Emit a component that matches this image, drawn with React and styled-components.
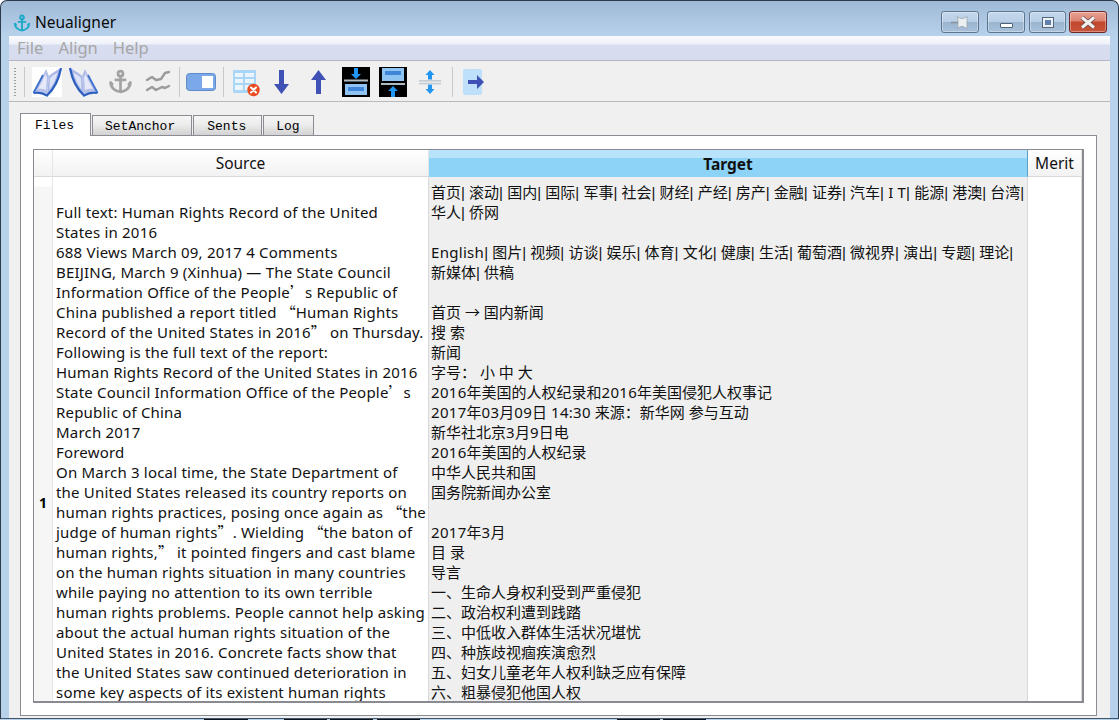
import React from "react";
import styled, { createGlobalStyle } from "styled-components";

const GlobalStyle = createGlobalStyle`
  html, body { margin: 0; padding: 0; background: #fff; }
  #root { width: 1119px; height: 720px; overflow: hidden; }
`;

const uiFont = `"Noto Sans", "Noto Sans CJK SC", sans-serif`;

const Page = styled.div`
  width: 1119px;
  height: 720px;
  display: flex;
  flex-direction: column;
  font-family: ${uiFont};
  overflow: hidden;
`;

const Window = styled.div`
  height: 719px;
  box-sizing: border-box;
  flex: none;
  display: flex;
  flex-direction: column;
  border: 1px solid #2c3a4a;
  border-bottom-color: #40566e;
  border-radius: 7px 7px 0 0;
  background: linear-gradient(180deg, #9fbad6 0, #b9d2ec 36px, #b8d1eb 100%);
`;

const TitleBar = styled.div`
  height: 35px;
  flex: none;
  display: flex;
  align-items: flex-start;
  padding: 10px 11px 0 12px;
  box-sizing: border-box;
`;

const TitleIcon = styled.div`
  width: 18px;
  height: 18px;
  margin: 3px 4px 0 0;
`;

const TitleText = styled.div`
  font-size: 15.5px;
  line-height: 23px;
  color: #0a0a0a;
  flex: 1;
`;

const CtrlButton = styled.div`
  width: ${(p) => p.$w || 38}px;
  height: 22px;
  margin-left: ${(p) => p.$gap || 0}px;
  box-sizing: border-box;
  border: 1px solid ${(p) => (p.$close ? "#6e2a26" : "#5d7692")};
  border-radius: 3px;
  background: ${(p) =>
    p.$close
      ? "linear-gradient(180deg, #e8a294 0, #dc8270 45%, #c2472c 50%, #c8553a 100%)"
      : "linear-gradient(180deg, #c5d8ec 0, #b9cfe6 48%, #9ab5d0 52%, #a8c1da 100%)"};
  box-shadow: inset 0 0 0 1px rgba(255, 255, 255, 0.35);
  display: flex;
  align-items: center;
  justify-content: center;
`;

const MinGlyph = styled.div`
  width: 13px;
  height: 5px;
  margin-top: 7px;
  box-sizing: border-box;
  background: #fff;
  border: 1px solid #4f6176;
  border-radius: 1px;
`;

const MaxGlyph = styled.div`
  width: 12px;
  height: 11px;
  box-sizing: border-box;
  background: #5f83aa;
  border: 3px solid #eef1f5;
  outline: 1px solid #55677c;
  outline-offset: -1px;
`;

const Client = styled.div`
  flex: 1;
  margin: 0 8px;
  min-height: 0;
  display: flex;
  flex-direction: column;
  background: #f0f0f0;
`;

const MenuBar = styled.div`
  height: 25px;
  flex: none;
  display: flex;
  gap: 15px;
  padding: 0 0 2px 8px;
  box-sizing: border-box;
  align-items: center;
  font-size: 16.5px;
  color: #a6a6a6;
  background: linear-gradient(180deg, #fbfcfe 0, #eef1f9 8px, #d8deef 9px, #d6dcee 100%);
  border-bottom: 1px solid #b4b6c4;
`;

const ToolBar = styled.div`
  height: 41px;
  flex: none;
  display: flex;
  align-items: center;
  box-sizing: border-box;
  padding: 1px 0 0 5px;
  background: #f0f0f0;
  border-bottom: 1px solid #b9b9b9;
`;

const Grip = styled.div`
  width: 2px;
  height: 28px;
  margin-right: 5px;
  background: repeating-linear-gradient(180deg, #9a9a9a 0 1px, transparent 1px 3px);
`;

const Sep = styled.div`
  width: 1px;
  height: 30px;
  flex: none;
  margin: 0 ${(p) => p.$r ?? 3}px 0 ${(p) => p.$l ?? 3}px;
  background: #c8c8c8;
`;

const Tool = styled.div`
  width: 37px;
  height: 30px;
  flex: none;
  display: flex;
  align-items: center;
  justify-content: center;
`;

const Content = styled.div`
  flex: 1;
  min-height: 0;
  display: flex;
  flex-direction: column;
  padding: 12px 13px 2px 11px;
`;

const TabRow = styled.div`
  display: flex;
  align-items: flex-end;
  height: 22px;
  flex: none;
  position: relative;
  z-index: 1;
  margin-bottom: -1px;
`;

const Tab = styled.div`
  height: ${(p) => (p.$active ? 23 : 21)}px;
  box-sizing: border-box;
  padding: 0 ${(p) => p.$r}px 0 ${(p) => p.$l}px;
  margin-right: 1px;
  font-family: "Liberation Mono", monospace;
  font-size: 13px;
  line-height: ${(p) => (p.$active ? 23 : 21)}px;
  color: #000;
  border: 1px solid #8b8b93;
  border-bottom: ${(p) => (p.$active ? "none" : "1px solid #8b8b93")};
  background: ${(p) => (p.$active ? "#fff" : "linear-gradient(180deg, #f6f6f6 0, #ececec 45%, #d2d2d2 100%)")};
`;

const Pane = styled.div`
  flex: 1;
  min-height: 0;
  box-sizing: border-box;
  background: #fff;
  border: 1px solid #8b8b93;
  padding: 13px 12px 12px 12px;
  display: flex;
`;

const Table = styled.div`
  flex: 1;
  min-height: 0;
  overflow: hidden;
  display: grid;
  grid-template-columns: 19px 376px 599px 1fr;
  grid-template-rows: 27px 650px;
  border: 1px solid #8a8a92;
  border-right-width: 2px;
  border-bottom-width: 2px;
  box-sizing: border-box;
`;

const HeadCell = styled.div`
  font-size: 15.5px;
  line-height: ${(p) => (p.$active ? 28 : 27)}px;
  text-align: center;
  color: #111;
  box-sizing: border-box;
  font-weight: ${(p) => (p.$active ? 700 : 400)};
  border-bottom: 1px solid ${(p) => (p.$active ? "#8cd3f7" : "#d9d9d9")};
  border-right: 1px solid ${(p) => (p.$active ? "#5d9fc4" : "#e6e6e6")};
  background: ${(p) => (p.$active ? "#8cd3f7" : "linear-gradient(180deg, #ffffff 0, #fafafa 9px, #f2f2f2 100%)")};
  box-shadow: ${(p) => (p.$active ? "inset 0 8px 0 #b9e3fa" : "none")};
`;

const RowHead = styled.div`
  display: flex;
  align-items: center;
  justify-content: center;
  font-size: 14px;
  font-weight: 700;
  color: #000;
  background: linear-gradient(180deg, #fff 0, #fff 9px, #f6f6f6 10px);
  border-right: 1px solid #e6e6e6;
`;

const Cell = styled.div`
  box-sizing: border-box;
  padding: 5px 0 0 ${(p) => p.$pad ?? 3}px;
  font-size: 15px;
  line-height: 20px;
  color: #111;
  white-space: pre;
  overflow: hidden;
  background: ${(p) => p.$bg || "#fff"};
  border-right: 1px solid #d8d8d8;
`;

const Line = styled.div`
  height: 20px;
`;

const LatinRun = styled.span`
  letter-spacing: ${(p) => p.$track}px;
`;

const WideMark = styled.span`
  font-family: "Noto Sans CJK SC", sans-serif;
`;

const BarMark = styled.span`
  font-family: "Liberation Sans", sans-serif;
`;

const TaskStrip = styled.div`
  flex: none;
  height: 1px;
  display: flex;
  background: #b9d1e8;
`;

const TaskPiece = styled.div`
  width: ${(p) => p.$w}px;
  flex: none;
  background: ${(p) => (p.$dark ? "#10141c" : "transparent")};
`;

const sourceLines = [
  "",
  "Full text: Human Rights Record of the United",
  "States in 2016",
  "688 Views March 09, 2017 4 Comments",
  "BEIJING, March 9 (Xinhua) — The State Council",
  "Information Office of the People’s Republic of",
  "China published a report titled “Human Rights",
  "Record of the United States in 2016” on Thursday.",
  "Following is the full text of the report:",
  "Human Rights Record of the United States in 2016",
  "State Council Information Office of the People’s",
  "Republic of China",
  "March 2017",
  "Foreword",
  "On March 3 local time, the State Department of",
  "the United States released its country reports on",
  "human rights practices, posing once again as “the",
  "judge of human rights”. Wielding “the baton of",
  "human rights,” it pointed fingers and cast blame",
  "on the human rights situation in many countries",
  "while paying no attention to its own terrible",
  "human rights problems. People cannot help asking",
  "about the actual human rights situation of the",
  "United States in 2016. Concrete facts show that",
  "the United States saw continued deterioration in",
  "some key aspects of its existent human rights",
];

const targetLines = [
  "首页| 滚动| 国内| 国际| 军事| 社会| 财经| 产经| 房产| 金融| 证券| 汽车| I T| 能源| 港澳| 台湾|",
  "华人| 侨网",
  "",
  "English| 图片| 视频| 访谈| 娱乐| 体育| 文化| 健康| 生活| 葡萄酒| 微视界| 演出| 专题| 理论|",
  "新媒体| 供稿",
  "",
  "首页 → 国内新闻",
  "搜 索",
  "新闻",
  "字号： 小 中 大",
  "2016年美国的人权纪录和2016年美国侵犯人权事记",
  "2017年03月09日 14:30 来源：新华网 参与互动",
  "新华社北京3月9日电",
  "2016年美国的人权纪录",
  "中华人民共和国",
  "国务院新闻办公室",
  "",
  "2017年3月",
  "目 录",
  "导言",
  "一、生命人身权利受到严重侵犯",
  "二、政治权利遭到践踏",
  "三、中低收入群体生活状况堪忧",
  "四、种族歧视痼疾演愈烈",
  "五、妇女儿童老年人权利缺乏应有保障",
  "六、粗暴侵犯他国人权",
];

const strip = [
  [204, 0], [44, 1], [36, 0], [43, 1], [3, 0], [43, 1], [4, 0], [43, 1], [197, 0], [43, 1], [3, 0], [43, 1],
];

// source text has curly quotes drawn full width, as the CJK font does
const sourceParts = (text) =>
  text.split(/([“”’])/).map((part, i) =>
    i % 2 ? <WideMark key={i}>{part}</WideMark> : <LatinRun key={i} $track={0.2}>{part}</LatinRun>
  );

// bars are narrow in the reference, digits and latin a little wide
const targetParts = (text) =>
  text.split(/(\| ?|[A-Za-z0-9:]+)/).map((part, i) => {
    if (i % 2 === 0) return part;
    if (part[0] === "|") return <BarMark key={i}>{part}</BarMark>;
    return <LatinRun key={i} $track={0.3}>{part}</LatinRun>;
  });

const AnchorGlyph = ({ color, size, width }) => (
  <svg width={size} height={size} viewBox="0 0 24 24" fill="none" stroke={color} strokeWidth={width} strokeLinecap="round" strokeLinejoin="round">
    <circle cx="12" cy="4.5" r="2.4" />
    <path d="M12 7v15M7.5 10.5h9M2.5 13l1.5 1.5 M2.5 13c0 5 4.5 8.500 9.500 9c5-.5 9.500-4 9.500-9M21.500 13 20 14.500" />
  </svg>
);

const BookGlyph = ({ flip, plate }) => (
  <svg width="30" height="30" viewBox="0 0 30 30" style={{ background: plate ? "#fff" : "none", transform: flip ? "scaleX(-1)" : "none" }}>
    <path d="M14 2 17 9 15 27C11 25 6 24 2 25 6 19 10 10 14 2z" fill="#b4bfe8" />
    <path d="M13.500 7 15 11 14 23C11 22 9 21.500 6 22 9 17 11.500 12 13.500 7z" fill="#e4e8f8" />
    <path d="M17 9C20 6 25 3 29 1 27 11 23 20 17 27H15z" fill="#a9b7e6" />
    <path d="M18 11C20 9 23 7 25.500 5.500 24 12 21 18 17.500 22.500z" fill="#dde3f6" />
    <path d="M1.500 26C6 25 11 26 15 28.500 22 22 27 12 29 1" fill="none" stroke="#2c5fc0" strokeWidth="2.200" />
    <path d="M1.500 26C4 21 8 14 11 8" fill="none" stroke="#3d70cc" strokeWidth="1.800" />
  </svg>
);

const WaveGlyph = () => (
  <svg width="26" height="26" viewBox="0 0 26 26" fill="none" stroke="#9b9b9b" strokeWidth="2.4" strokeLinecap="round" strokeLinejoin="round">
    <path d="M2 11l5-3 4 3 5-1 4-6 4-1" />
    <path d="M2 21l5-3 4 3 6-3 3 1 4-2" />
  </svg>
);

const ToggleGlyph = () => (
  <svg width="30" height="18" viewBox="0 0 30 18" style={{ marginRight: 1 }}>
    <rect x="0.5" y="0.5" width="29" height="17" rx="3" fill="#7ba8e8" stroke="#5f8cc8" />
    <rect x="16" y="3" width="11" height="12" fill="#fff" />
  </svg>
);

const TableXGlyph = () => (
  <svg width="30" height="30" viewBox="0 0 30 30" style={{ marginLeft: 2 }}>
    <rect x="2" y="3" width="23" height="23" rx="1" fill="#a9d6f7" />
    <path d="M4 6h8v4H4zM14 6h9v4h-9zM4 12h8v4H4zM14 12h9v4h-9zM4 18h8v5H4zM14 18h9v5h-9z" fill="#eaf5fd" />
    <circle cx="22.5" cy="23" r="6.2" fill="#ea4a1f" />
    <path d="M20 20.5l5 5M25 20.5l-5 5" stroke="#fff" strokeWidth="2" strokeLinecap="round" />
  </svg>
);

const ArrowGlyph = ({ up }) => (
  <svg width="15" height="24" viewBox="0 0 15 24">
    <path d={up ? "M7.500 0 15 10H10V24H5V10H0z" : "M7.500 24 15 14H10V0H5V14H0z"} fill="#3f51b5" />
  </svg>
);

const BlackDown = () => (
  <svg width="28" height="30" viewBox="0 0 28 30">
    <rect width="28" height="30" fill="#000" />
    <path d="M14 12l5-5h-3V1h-4v6H9z" fill="#2196f3" />
    <rect x="2" y="12.500" width="24" height="2" fill="#b0bcc4" />
    <rect x="3" y="17" width="22" height="11" fill="#8fc4f2" />
    <rect x="6" y="20" width="16" height="4" fill="#3f86d8" />
  </svg>
);

const BlackUp = () => (
  <svg width="28" height="30" viewBox="0 0 28 30">
    <rect width="28" height="30" fill="#000" />
    <rect x="3" y="1" width="22" height="13" fill="#8fc4f2" />
    <rect x="6" y="4" width="16" height="4" fill="#3f86d8" />
    <rect x="2" y="16" width="24" height="2" fill="#b0bcc4" />
    <path d="M14 19l5 5h-3v6h-4v-6H9z" fill="#2196f3" />
  </svg>
);

const SplitGlyph = () => (
  <svg width="22" height="24" viewBox="0 0 22 24">
    <path d="M11 0l4.500 5H13v4.500H9V5H6.500zM11 24l4.500-5H13v-4.500H9V19H6.500z" fill="#2196f3" />
    <rect y="10" width="22" height="1.600" fill="#c2ccd2" />
    <rect y="12.800" width="22" height="1.600" fill="#c2ccd2" />
  </svg>
);

const NextGlyph = () => (
  <svg width="21" height="26" viewBox="0 0 21 26" style={{ marginRight: 2 }}>
    <rect width="19" height="26" rx="2" fill="#bfe0fb" />
    <path d="M5 11h9V6l7 7-7 7v-5H5z" fill="#3f51b5" />
  </svg>
);

const PinGlyph = () => (
  <svg width="18" height="15" viewBox="0 0 18 15">
    <path d="M0 7.500h7" stroke="#8a8f96" strokeWidth="1.500" />
    <path d="M6 1.500c2 1.500 3 2 6 2l4-2v12l-4-2c-3 0-4 .5-6 2 1-2 1-3.500 1-6S7 3.500 6 1.500z" fill="#eceff2" stroke="#9aa3ad" strokeWidth=".8" />
  </svg>
);

const CloseGlyph = () => (
  <svg width="16" height="13" viewBox="0 0 16 13">
    <path d="M2 1.500l12 10M14 1.500l-12 10" stroke="#5a4a48" strokeWidth="4.500" />
    <path d="M2 1.500l12 10M14 1.500l-12 10" stroke="#f4f0ee" strokeWidth="3" />
  </svg>
);

export default function App() {
  return (
    <Page>
      <GlobalStyle />
      <Window>
        <TitleBar>
          <TitleIcon>
            <AnchorGlyph color="#1fa9c8" size={18} width={2.6} />
          </TitleIcon>
          <TitleText>Neualigner</TitleText>
          <CtrlButton>
            <PinGlyph />
          </CtrlButton>
          <CtrlButton $gap={8}>
            <MinGlyph />
          </CtrlButton>
          <CtrlButton $gap={4} $w={37}>
            <MaxGlyph />
          </CtrlButton>
          <CtrlButton $gap={3} $close>
            <CloseGlyph />
          </CtrlButton>
        </TitleBar>
        <Client>
          <MenuBar>
            <span>File</span>
            <span>Align</span>
            <span>Help</span>
          </MenuBar>
          <ToolBar>
            <Grip />
            <Sep />
            <Tool><BookGlyph plate /></Tool>
            <Tool><BookGlyph flip /></Tool>
            <Tool><AnchorGlyph color="#a3a3a3" size={25} width={2.6} /></Tool>
            <Tool><WaveGlyph /></Tool>
            <Sep />
            <Tool><ToggleGlyph /></Tool>
            <Sep $r={2} />
            <Tool><TableXGlyph /></Tool>
            <Tool><ArrowGlyph /></Tool>
            <Tool><ArrowGlyph up /></Tool>
            <Tool><BlackDown /></Tool>
            <Tool><BlackUp /></Tool>
            <Tool><SplitGlyph /></Tool>
            <Sep $l={4} />
            <Tool><NextGlyph /></Tool>
          </ToolBar>
          <Content>
            <TabRow>
              <Tab $active $l={14} $r={16}>Files</Tab>
              <Tab $l={12} $r={16}>SetAnchor</Tab>
              <Tab $l={13} $r={15}>Sents</Tab>
              <Tab $l={12} $r={13}>Log</Tab>
            </TabRow>
            <Pane>
              <Table>
                <HeadCell />
                <HeadCell>Source</HeadCell>
                <HeadCell $active>Target</HeadCell>
                <HeadCell>Merit</HeadCell>
                <RowHead>1</RowHead>
                <Cell>
                  {sourceLines.map((text, i) => (
                    <Line key={i}>{sourceParts(text)}</Line>
                  ))}
                </Cell>
                <Cell $bg="#efefef" $pad={2}>
                  {targetLines.map((text, i) => (
                    <Line key={i}>{targetParts(text)}</Line>
                  ))}
                </Cell>
                <Cell />
              </Table>
            </Pane>
          </Content>
        </Client>
      </Window>
      <TaskStrip>
        {strip.map(([w, dark], i) => (
          <TaskPiece key={i} $w={w} $dark={dark} />
        ))}
      </TaskStrip>
    </Page>
  );
}
